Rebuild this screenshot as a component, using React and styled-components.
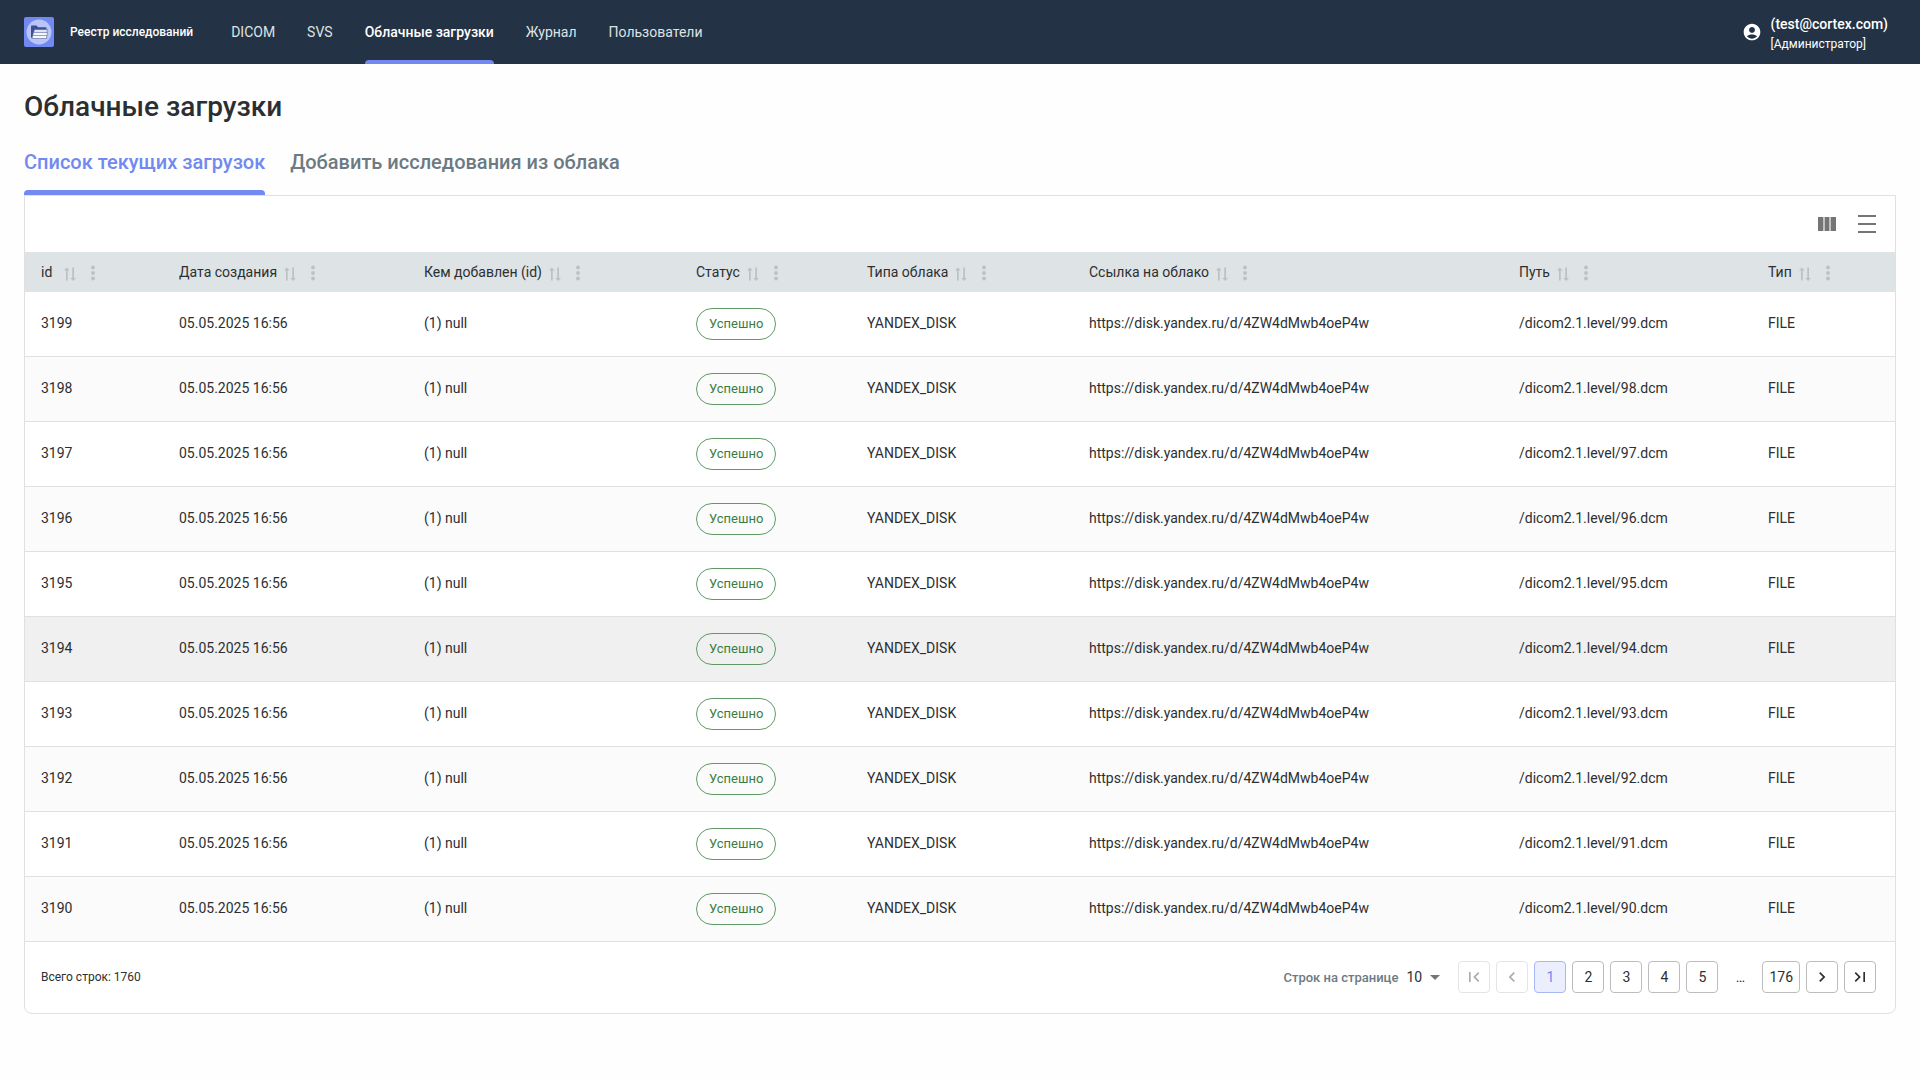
import React, { useState } from 'react';
import styled, { createGlobalStyle } from 'styled-components';

const GlobalStyle = createGlobalStyle`
  body {
    margin: 0;
    background: #fefefe;
    color: #2c2f31;
    font-family: Roboto, 'Liberation Sans', sans-serif;
    font-size: 14px;
    line-height: 20px;
  }

  *, *::before, *::after {
    box-sizing: border-box;
  }

  button, select {
    font: inherit;
    color: inherit;
    margin: 0;
    padding: 0;
    border: 0;
    background: none;
    cursor: pointer;
  }

  a {
    color: inherit;
    text-decoration: none;
  }
`;

const Header = styled.header`
  display: flex;
  align-items: center;
  height: 64px;
  padding: 0 32px 0 24px;
  background: #233244;
  color: #fff;
`;

const Brand = styled.a`
  display: flex;
  align-items: center;
  gap: 16px;
  font-size: 12px;
  font-weight: 500;
`;

const Nav = styled.nav`
  display: flex;
  align-self: stretch;
  gap: 32px;
  margin-left: 38px;
`;

const NavLink = styled.a`
  display: flex;
  align-items: center;
  position: relative;
  color: ${(props) => (props.$active ? '#fff' : '#dee3e5')};
  font-weight: ${(props) => (props.$active ? 500 : 400)};

  &::after {
    content: '';
    display: ${(props) => (props.$active ? 'block' : 'none')};
    position: absolute;
    left: 0;
    right: 0;
    bottom: 0;
    height: 4px;
    border-radius: 4px 4px 0 0;
    background: #7189f0;
  }
`;

const User = styled.button`
  display: flex;
  align-items: center;
  gap: 9px;
  margin-left: auto;
  color: #fff;
  text-align: left;
  font-weight: 500;
`;

const UserText = styled.span`
  padding-top: 4px;
`;

const Role = styled.span`
  display: block;
  font-size: 12px;
  font-weight: 400;
`;

const Main = styled.main`
  padding: 24px;
`;

const Title = styled.h1`
  margin: 0;
  font-size: 28px;
  line-height: 38px;
  font-weight: 500;
`;

const Tabs = styled.div`
  display: flex;
  gap: 25px;
  margin-top: 18px;
`;

const Tab = styled.button`
  position: relative;
  height: 51px;
  padding-bottom: 15px;
  font-size: 20px;
  line-height: 36px;
  font-weight: 500;
  color: ${(props) => (props.$active ? '#7189f0' : '#6c7a83')};

  &::after {
    content: '';
    display: ${(props) => (props.$active ? 'block' : 'none')};
    position: absolute;
    left: 0;
    right: 0;
    bottom: 0;
    height: 5px;
    border-radius: 4px 4px 0 0;
    background: #7189f0;
  }
`;

const Panel = styled.section`
  border: 1px solid #dee0e2;
  border-radius: 0 0 8px 8px;
  background: #fff;
`;

const Toolbar = styled.div`
  display: flex;
  justify-content: flex-end;
  gap: 16px;
  height: 56px;
  padding: 16px;
`;

const IconButton = styled.button`
  display: flex;
  width: 24px;
  height: 24px;
  color: #757575;
`;

const Table = styled.table`
  width: 100%;
  border-collapse: separate;
  border-spacing: 0;
  table-layout: fixed;
`;

const HeadCell = styled.th`
  height: 40px;
  padding: 0 0 0 16px;
  background: #dee3e5;
  font-weight: 400;
  text-align: left;
`;

const HeadContent = styled.div`
  display: flex;
  align-items: center;
`;

const SortButton = styled.button`
  display: flex;
  margin-left: ${(props) => (props.$wide ? '11px' : '6px')};
  padding-top: 3px;
  color: #bcc1c3;
`;

const MenuButton = styled.button`
  display: flex;
  margin-left: 8px;
  padding-top: 2px;
  color: #bcc1c3;
`;

const Row = styled.tr`
  background: ${(props) => (props.$hovered ? '#f0f0f0' : '#fff')};

  &:nth-child(even) {
    background: ${(props) => (props.$hovered ? '#f0f0f0' : '#fbfbfb')};
  }
`;

const Cell = styled.td`
  height: 65px;
  padding: 0 0 2px 16px;
  border-bottom: 1px solid #dee0e2;
  white-space: nowrap;
`;

const ChipCell = styled(Cell)`
  padding-bottom: 0;
`;

const Chip = styled.span`
  display: inline-flex;
  align-items: center;
  height: 32px;
  padding: 0 12px;
  border: 1px solid #5f9a66;
  border-radius: 16px;
  color: #3a7d44;
  font-size: 13px;
  vertical-align: middle;
`;

const Footer = styled.footer`
  display: flex;
  align-items: center;
  justify-content: space-between;
  height: 71px;
  padding: 0 19px 2px 16px;
`;

const Total = styled.span`
  font-size: 12px;
`;

const Pager = styled.div`
  display: flex;
  align-items: center;
  gap: 6px;
`;

const PageSize = styled.label`
  display: flex;
  align-items: center;
  gap: 8px;
  margin-right: 12px;
  padding-top: 2px;
  color: #6c7a83;
  font-size: 13px;
  font-weight: 500;
`;

const SelectBox = styled.span`
  display: flex;
  align-items: center;
  color: #757575;
`;

const Select = styled.select`
  appearance: none;
  width: 24px;
  padding-bottom: 2px;
  outline: none;
  color: #2c2f31;
  font-size: 14px;
  font-weight: 400;
`;

const PageButton = styled.button`
  display: flex;
  align-items: center;
  justify-content: center;
  min-width: 32px;
  height: 32px;
  padding: 0 6px;
  border: 1px solid ${(props) => (props.$active ? '#a9b8f5' : '#bdbdbd')};
  border-radius: 4px;
  background: ${(props) => (props.$active ? '#ebeefd' : '#fff')};
  color: ${(props) => (props.$active ? '#7189f0' : '#2c2f31')};

  &:disabled {
    border-color: #e4e4e4;
    color: #ababab;
    cursor: default;
  }
`;

const ArrowButton = styled(PageButton)`
  padding: 0;
`;

const Ellipsis = styled.span`
  width: 32px;
  text-align: center;
`;

const Logo = () => (
  <svg width="30" height="30" viewBox="0 0 30 30" aria-hidden="true">
    <rect width="30" height="30" rx="2" fill="#7189f0" />
    <circle cx="15" cy="15" r="12.500" fill="#b9c5f8" />
    <path d="M7 9.500q0-1 1-1h4.500l1.500 1.700h7.500q1 0 1 1V21H8q-1 0-1-1z" fill="#3d4f8f" />
    <path d="M10.500 12.500h13l-1 5H9z" fill="#dfe4f5" stroke="#5a689c" strokeWidth=".6" />
    <path d="M9.500 15.500h14L22.500 21.500H8z" fill="#f4f6fd" stroke="#5a689c" strokeWidth=".6" />
    <path d="M9 18.500h14" stroke="#5a689c" strokeWidth=".6" />
  </svg>
);

const UserIcon = () => (
  <svg width="20" height="20" viewBox="0 0 24 24" fill="currentColor" aria-hidden="true">
    <path d="M12 2C6.480 2 2 6.480 2 12s4.480 10 10 10 10-4.480 10-10S17.520 2 12 2zm0 4c1.930 0 3.500 1.570 3.500 3.500S13.930 13 12 13s-3.500-1.570-3.500-3.500S10.070 6 12 6zm0 14c-2.030 0-4.430-.82-6.140-2.880C7.550 15.800 9.680 15 12 15s4.450.8 6.140 2.120C16.430 19.180 14.030 20 12 20z" />
  </svg>
);

const ColumnsIcon = () => (
  <svg width="24" height="24" viewBox="0 0 24 24" fill="currentColor" aria-hidden="true">
    <path d="M3 5h18v14H3z" opacity=".45" />
    <path d="M3 5h5v14H3zM10 5h4v14h-4zM16 5h5v14h-5z" />
  </svg>
);

const DensityIcon = () => (
  <svg width="24" height="24" viewBox="0 0 24 24" fill="currentColor" aria-hidden="true">
    <path d="M3 3h18v2H3zM3 11h18v2H3zM3 19h18v2H3z" />
  </svg>
);

const SortIcon = () => (
  <svg width="14" height="16" viewBox="0 0 14 16" fill="currentColor" aria-hidden="true">
    <path d="M3 3h1.700v11.500H3zM9.300 1.500H11V13H9.300z" />
    <path d="M1 4.500L3.850 1.500l2.850 3zM7.300 12l2.850 3L13 12z" />
  </svg>
);

const DotsIcon = () => (
  <svg width="16" height="16" viewBox="0 0 16 16" fill="currentColor" aria-hidden="true">
    <circle cx="8" cy="2.500" r="1.900" />
    <circle cx="8" cy="8" r="1.900" />
    <circle cx="8" cy="13.500" r="1.900" />
  </svg>
);

const CaretIcon = () => (
  <svg width="10" height="5" viewBox="0 0 10 5" fill="currentColor" aria-hidden="true">
    <path d="M0 0h10L5 5z" />
  </svg>
);

const arrows = {
  first: 'M18.410 16.590L13.820 12l4.590-4.590L17 6l-6 6 6 6zM6 6h2v12H6z',
  prev: 'M15.410 7.410L14 6l-6 6 6 6 1.410-1.410L10.830 12z',
  next: 'M10 6L8.590 7.410 13.170 12l-4.580 4.590L10 18l6-6z',
  last: 'M5.590 7.410L10.180 12l-4.590 4.590L7 18l6-6-6-6zM16 6h2v12h-2z',
};

const ArrowIcon = ({ name }) => (
  <svg width="20" height="20" viewBox="0 0 24 24" fill="currentColor" aria-hidden="true">
    <path d={arrows[name]} />
  </svg>
);

const navItems = ['DICOM', 'SVS', 'Облачные загрузки', 'Журнал', 'Пользователи'];

const columns = [
  { title: 'id', width: 138 },
  { title: 'Дата создания', width: 245 },
  { title: 'Кем добавлен (id)', width: 272 },
  { title: 'Статус', width: 171 },
  { title: 'Типа облака', width: 222 },
  { title: 'Ссылка на облако', width: 430 },
  { title: 'Путь', width: 249 },
  { title: 'Тип', width: 143 },
];

const rows = [99, 98, 97, 96, 95, 94, 93, 92, 91, 90].map((n) => ({
  id: 3100 + n,
  created: '05.05.2025 16:56',
  author: '(1) null',
  status: 'Успешно',
  cloud: 'YANDEX_DISK',
  link: 'https://disk.yandex.ru/d/4ZW4dMwb4oeP4w',
  path: `/dicom2.1.level/${n}.dcm`,
  type: 'FILE',
}));

const UploadsTable = () => {
  const [hovered, setHovered] = useState(3194);

  return (
    <Table>
      <colgroup>
        {columns.map(({ title, width }) => (
          <col key={title} width={width} />
        ))}
      </colgroup>
      <thead>
        <tr>
          {columns.map(({ title }) => (
            <HeadCell key={title} scope="col">
              <HeadContent>
                {title}
                <SortButton $wide={title === 'id'} aria-label="Сортировать">
                  <SortIcon />
                </SortButton>
                <MenuButton aria-label="Меню столбца">
                  <DotsIcon />
                </MenuButton>
              </HeadContent>
            </HeadCell>
          ))}
        </tr>
      </thead>
      <tbody>
        {rows.map((row) => (
          <Row
            key={row.id}
            $hovered={row.id === hovered}
            onMouseEnter={() => setHovered(row.id)}
          >
            <Cell>{row.id}</Cell>
            <Cell>{row.created}</Cell>
            <Cell>{row.author}</Cell>
            <ChipCell>
              <Chip>{row.status}</Chip>
            </ChipCell>
            <Cell>{row.cloud}</Cell>
            <Cell>{row.link}</Cell>
            <Cell>{row.path}</Cell>
            <Cell>{row.type}</Cell>
          </Row>
        ))}
      </tbody>
    </Table>
  );
};

const Pagination = () => {
  const [page, setPage] = useState(1);

  return (
    <Pager>
      <PageSize>
        Строк на странице
        <SelectBox>
          <Select defaultValue="10">
            <option>10</option>
            <option>25</option>
            <option>50</option>
          </Select>
          <CaretIcon />
        </SelectBox>
      </PageSize>
      <ArrowButton disabled={page === 1} onClick={() => setPage(1)} aria-label="Первая">
        <ArrowIcon name="first" />
      </ArrowButton>
      <ArrowButton disabled={page === 1} onClick={() => setPage(page - 1)} aria-label="Назад">
        <ArrowIcon name="prev" />
      </ArrowButton>
      {[1, 2, 3, 4, 5].map((n) => (
        <PageButton key={n} $active={n === page} onClick={() => setPage(n)}>
          {n}
        </PageButton>
      ))}
      <Ellipsis>…</Ellipsis>
      <PageButton onClick={() => setPage(176)}>176</PageButton>
      <ArrowButton disabled={page === 176} onClick={() => setPage(page + 1)} aria-label="Вперёд">
        <ArrowIcon name="next" />
      </ArrowButton>
      <ArrowButton disabled={page === 176} onClick={() => setPage(176)} aria-label="Последняя">
        <ArrowIcon name="last" />
      </ArrowButton>
    </Pager>
  );
};

const App = () => {
  return (
    <>
      <GlobalStyle />
      <Header>
        <Brand href="#">
          <Logo />
          Реестр исследований
        </Brand>
        <Nav>
          {navItems.map((item) => (
            <NavLink key={item} href="#" $active={item === 'Облачные загрузки'}>
              {item}
            </NavLink>
          ))}
        </Nav>
        <User>
          <UserIcon />
          <UserText>
            (test@cortex.com)
            <Role>[Администратор]</Role>
          </UserText>
        </User>
      </Header>
      <Main>
        <Title>Облачные загрузки</Title>
        <Tabs>
          <Tab $active>Список текущих загрузок</Tab>
          <Tab>Добавить исследования из облака</Tab>
        </Tabs>
        <Panel>
          <Toolbar>
            <IconButton aria-label="Столбцы">
              <ColumnsIcon />
            </IconButton>
            <IconButton aria-label="Плотность">
              <DensityIcon />
            </IconButton>
          </Toolbar>
          <UploadsTable />
          <Footer>
            <Total>Всего строк: 1760</Total>
            <Pagination />
          </Footer>
        </Panel>
      </Main>
    </>
  );
};

export default App;
